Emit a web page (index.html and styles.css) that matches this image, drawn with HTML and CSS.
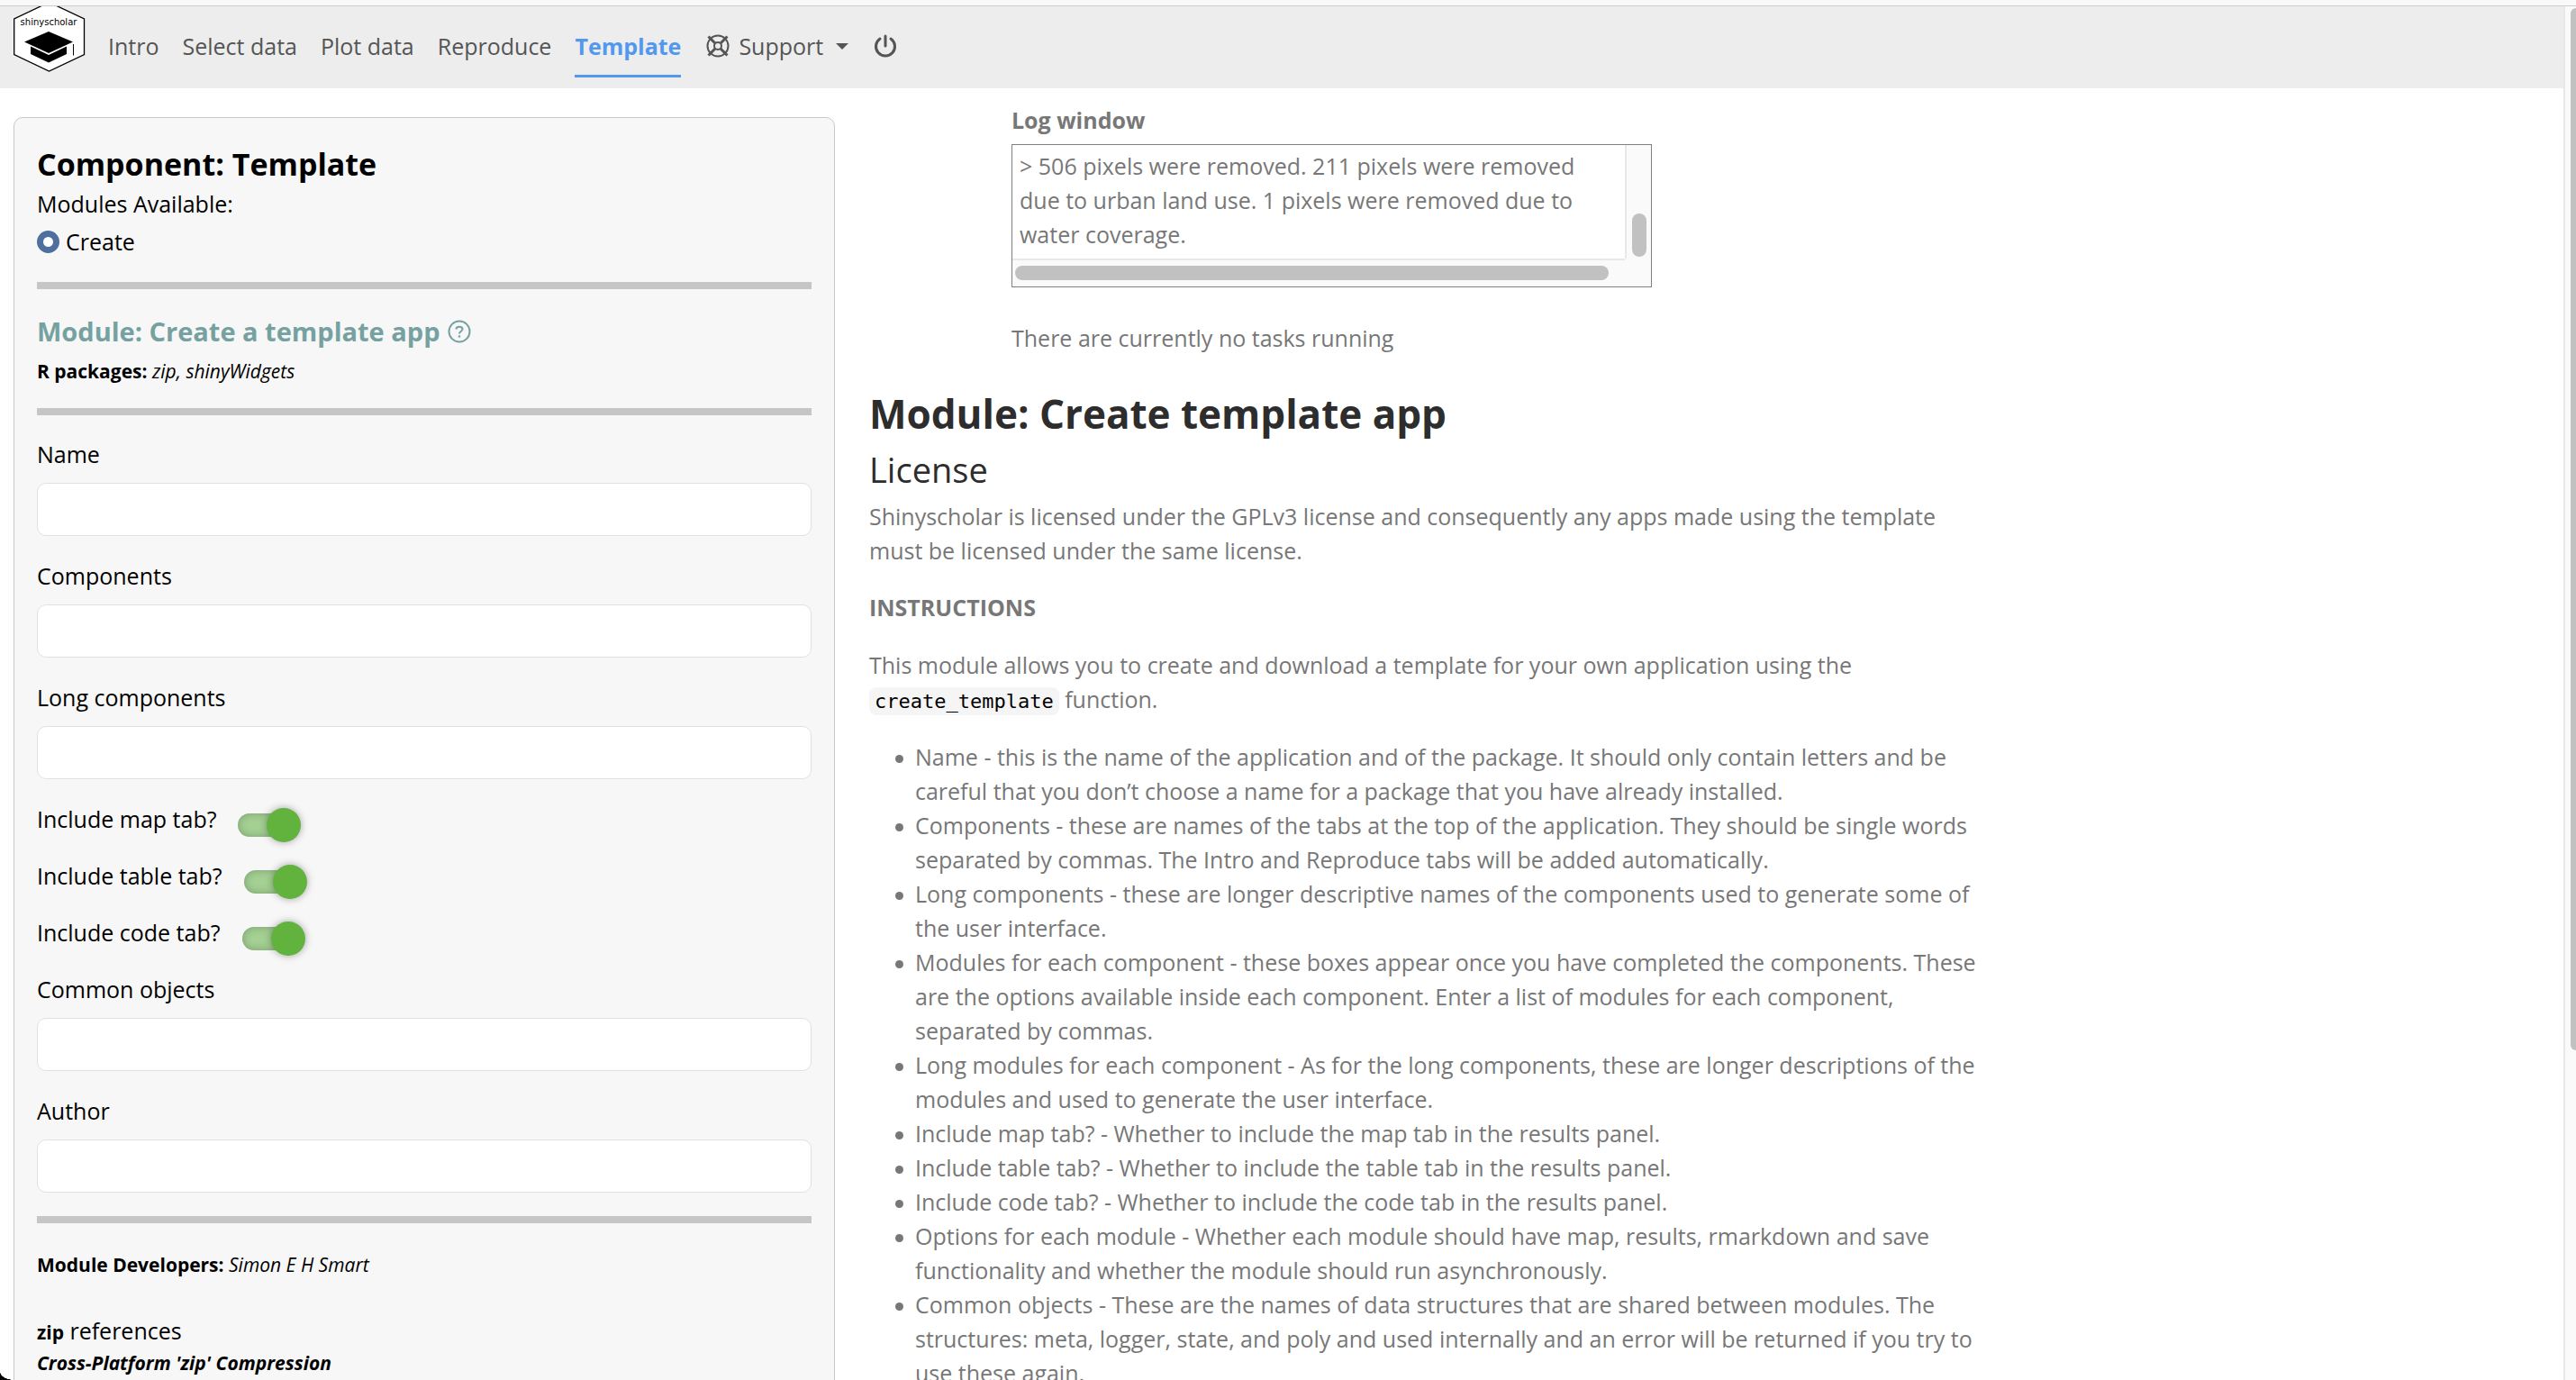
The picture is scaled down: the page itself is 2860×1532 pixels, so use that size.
FILE: index.html
```html
<!DOCTYPE html>
<html lang="en">
<head>
<meta charset="utf-8">
<title>shinyscholar</title>
<link rel="stylesheet" href="styles.css">
</head>
<body>
<div class="window-edge"></div>
<header class="navbar">
  <a class="brand" href="#" aria-label="shinyscholar">
    <svg width="80" height="74" viewBox="15 7 80 74">
      <path d="M54.500 2.500L93.500 21v39.500L54.500 79L15.700 60.500V21Z" fill="#fff" stroke="#000" stroke-width="1.300"/>
      <text class="brand-text" x="54" y="28" text-anchor="middle">shinyscholar</text>
      <path d="M54 35L81 46.500L54 59L27 46.500Z" fill="#000"/>
      <path d="M34 51.500L54 61L74 51.500V60L54 69.500L34 60Z" fill="#000"/>
      <path d="M81.500 49V61.500" stroke="#000" stroke-width="1"/>
    </svg>
  </a>
  <nav class="tabs">
    <a class="tab" href="#">Intro</a>
    <a class="tab" href="#">Select data</a>
    <a class="tab" href="#">Plot data</a>
    <a class="tab" href="#">Reproduce</a>
    <a class="tab tab-active" href="#">Template</a>
    <a class="tab tab-icon" href="#">
      <svg width="26" height="26" viewBox="0 0 26 26" fill="none" stroke="currentColor" stroke-width="2">
        <circle cx="13" cy="13" r="11.500"/><circle cx="13" cy="13" r="4"/>
        <path d="M2.500 2.500l7.500 7.500M23.500 2.500L16 10M2.500 23.500L10 16M23.500 23.500L16 16" stroke-width="3"/>
      </svg>
      Support
      <svg class="caret" width="14" height="7" viewBox="0 0 14 7"><path d="M0 0h14L7 7z" fill="currentColor"/></svg>
    </a>
    <a class="tab tab-icon" href="#" aria-label="Quit">
      <svg width="26" height="26" viewBox="0 0 26 26" fill="none" stroke="currentColor" stroke-width="3" stroke-linecap="round">
        <path d="M13 2v11M7 5A10.500 10.500 0 1 0 19 5"/>
      </svg>
    </a>
  </nav>
</header>
<main class="page">
  <aside class="panel">
    <h2 class="component-title">Component: Template</h2>
    <fieldset class="modules">
      <legend>Modules Available:</legend>
      <label class="radio-row"><input class="radio" type="radio" name="module" checked>Create</label>
    </fieldset>
    <hr class="rule">
    <h3 class="module-title">Module: Create a template app
      <svg width="26" height="26" viewBox="0 0 26 26" fill="none" stroke="currentColor" stroke-width="2">
        <circle cx="13" cy="13" r="11.500"/>
        <path d="M9.500 10.500C9.500 6.800 16.500 6.800 16.500 10.500C16.500 12.800 13 12.800 13 15.500"/>
        <circle cx="13" cy="18.500" r="1.300" fill="currentColor" stroke="none"/>
      </svg>
    </h3>
    <p class="small"><strong>R packages:</strong> <em>zip, shinyWidgets</em></p>
    <hr class="rule">
    <form class="form">
      <div class="field"><label for="name">Name</label><input id="name" class="text" type="text"></div>
      <div class="field"><label for="components">Components</label><input id="components" class="text" type="text"></div>
      <div class="field"><label for="long">Long components</label><input id="long" class="text" type="text"></div>
      <div class="switch-row"><label for="map">Include map tab?</label><input id="map" class="switch" type="checkbox" checked></div>
      <div class="switch-row"><label for="table">Include table tab?</label><input id="table" class="switch" type="checkbox" checked></div>
      <div class="switch-row"><label for="code">Include code tab?</label><input id="code" class="switch" type="checkbox" checked></div>
      <div class="field"><label for="common">Common objects</label><input id="common" class="text" type="text"></div>
      <div class="field"><label for="author">Author</label><input id="author" class="text" type="text"></div>
    </form>
    <hr class="rule">
    <p class="small developers"><strong>Module Developers:</strong> <em>Simon E H Smart</em></p>
    <p class="reference"><strong>zip</strong> references</p>
    <p class="small"><strong><em>Cross-Platform 'zip' Compression</em></strong></p>
  </aside>
  <section class="results">
    <div class="status">
      <h4 class="log-title">Log window</h4>
      <div class="log">
        <div class="log-text">&gt; 506 pixels were removed. 211 pixels were removed due to urban land use. 1 pixels were removed due to water coverage.</div>
        <div class="log-vbar"><span class="log-vthumb"></span></div>
        <div class="log-hbar"><span class="log-hthumb"></span></div>
      </div>
      <p class="tasks">There are currently no tasks running</p>
    </div>
    <article class="guide">
      <h1>Module: Create template app</h1>
      <h2>License</h2>
      <p>Shinyscholar is licensed under the GPLv3 license and consequently any apps made using the template must be licensed under the same license.</p>
      <p><strong>INSTRUCTIONS</strong></p>
      <p>This module allows you to create and download a template for your own application using the <code>create_template</code> function.</p>
      <ul>
        <li>Name - this is the name of the application and of the package. It should only contain letters and be careful that you don’t choose a name for a package that you have already installed.</li>
        <li>Components - these are names of the tabs at the top of the application. They should be single words separated by commas. The Intro and Reproduce tabs will be added automatically.</li>
        <li>Long components - these are longer descriptive names of the components used to generate some of the user interface.</li>
        <li>Modules for each component - these boxes appear once you have completed the components. These are the options available inside each component. Enter a list of modules for each component, separated by commas.</li>
        <li>Long modules for each component - As for the long components, these are longer descriptions of the modules and used to generate the user interface.</li>
        <li>Include map tab? - Whether to include the map tab in the results panel.</li>
        <li>Include table tab? - Whether to include the table tab in the results panel.</li>
        <li>Include code tab? - Whether to include the code tab in the results panel.</li>
        <li>Options for each module - Whether each module should have map, results, rmarkdown and save functionality and whether the module should run asynchronously.</li>
        <li>Common objects - These are the names of data structures that are shared between modules. The structures: meta, logger, state, and poly and used internally and an error will be returned if you try to use these again.</li>
      </ul>
    </article>
  </section>
</main>
<div class="page-scroll"><span class="page-thumb"></span></div>
<div class="window-corner"></div>
</body>
</html>
```
FILE: styles.css
```css
* { box-sizing: border-box; }
body {
  margin: 0;
  height: 100vh;
  overflow: hidden;
  background: #fff;
  color: #777;
  font: 25px/38px "Open Sans", "Noto Sans", sans-serif;
}
h1, h2, h3, h4, p, ul { margin: 0; }

.window-edge { height: 7px; background: #f8f9fb; border-bottom: 1px solid #ccc; }
.navbar {
  display: flex;
  align-items: flex-start;
  height: 91px;
  padding-left: 15px;
  background: #ededed;
}
.brand { display: block; height: 74px; }
.brand-text { font: 10px "DejaVu Sans", sans-serif; fill: #000; }
.tabs { display: flex; gap: 26px; padding: 25px 0 0 25px; }
.tab {
  height: 54px;
  border-bottom: 3px solid transparent;
  color: #555;
  text-decoration: none;
}
.tab-active { border-color: #5299ee; color: #5299ee; font-weight: 700; }
.tab-icon { display: flex; gap: 10px; margin-left: 2px; }
.tab-icon svg { margin-top: 6px; }
.tab-icon .caret { margin: 16px 0 0 4px; }

.page {
  display: grid;
  grid-template-columns: 912fr 1881fr;
  gap: 38px;
  padding: 32px 14px 0 15px;
}
.panel {
  padding: 28px 25px 100px;
  border: 1px solid #c8c8c8;
  border-radius: 10px;
  background: #f7f7f7;
  color: #000;
}
.component-title { font-size: 34px; line-height: 46px; }
.modules { margin: 2px 0 0; padding: 0; border: 0; }
.modules legend { padding: 0; }
.radio-row { display: flex; align-items: center; gap: 7px; margin-top: 4px; }
.radio {
  appearance: none;
  width: 25px;
  height: 25px;
  margin: 0;
  border: 7px solid #4f6f9f;
  border-radius: 50%;
  background: #fff;
}
.rule { height: 8px; margin: 26px 0 24px; border: 0; background: #c6c6c6; }
.module-title {
  display: flex;
  align-items: center;
  gap: 8px;
  padding-top: 2px;
  color: #76a1a1;
  font-size: 29px;
  line-height: 42px;
}
.small { font-size: 21px; line-height: 30px; }
.module-title + .small { margin-top: 8px; }
.form { display: grid; gap: 25px; }
.field { display: grid; gap: 13px; }
.text {
  width: 100%;
  height: 59px;
  padding: 0 18px;
  border: 1px solid #dfe1e3;
  border-radius: 10px;
  background: #fff;
  font: inherit;
}
.switch-row { display: flex; gap: 24px; height: 38px; }
.switch {
  appearance: none;
  position: relative;
  width: 64px;
  height: 26px;
  margin: 13px 0 0;
  border-radius: 13px;
  background: #a4d093;
  box-shadow: inset 0 0 10px rgba(0, 0, 0, .25);
}
.switch::before {
  content: "";
  position: absolute;
  top: -6px;
  right: -6px;
  width: 38px;
  height: 38px;
  border-radius: 50%;
  background: #62b33e;
  box-shadow: 0 0 8px rgba(0, 0, 0, .35);
}
.developers { margin-top: 31px; }
.reference { margin-top: 39px; }
.reference strong { font-size: 21px; }

.status { max-width: 711px; margin: -16px 0 0 158px; }
.log-title { font-size: 25px; }
.log {
  display: grid;
  grid-template: 126px 1fr / 1fr 29px;
  height: 159px;
  margin-top: 8px;
  border: 1px solid #808080;
  background: #fafafa;
}
.log-text { padding: 4px 8px 0; background: #fff; }
.log-vbar { display: flex; align-items: flex-end; justify-content: center; border-left: 2px solid #e8e8e8; }
.log-vthumb { width: 16px; height: 48px; margin-bottom: 2px; border-radius: 8px; background: #c1c1c1; }
.log-hbar { grid-column: 1 / 2; display: flex; align-items: center; padding: 0 18px 2px 3px; border-top: 2px solid #e8e8e8; }
.log-hthumb { flex: 1; height: 16px; border-radius: 8px; background: #c1c1c1; }
.tasks { margin-top: 37px; }

.guide { max-width: 1246px; margin-top: 37px; }
.guide h1 { color: #2d2d2d; font-size: 44px; line-height: 56px; }
.guide h2 { margin-top: 10px; color: #2d2d2d; font-size: 38px; font-weight: 400; line-height: 48px; }
.guide p { margin-bottom: 26px; }
.guide h2 + p { margin: 9px 0 25px; }
.guide code {
  padding: 3px 6px;
  border-radius: 8px;
  background: #f5f5f5;
  color: #000;
  font: 22px/28px "DejaVu Sans Mono", monospace;
}
.guide ul { padding-left: 51px; list-style: none; }
.guide li { position: relative; }
.guide li::before {
  content: "";
  position: absolute;
  left: -22px;
  top: 17px;
  width: 9px;
  height: 9px;
  border-radius: 50%;
  background: #777;
}

.page-scroll {
  position: fixed;
  inset: 7px 0 0 auto;
  width: 14px;
  padding: 2px 0 0 6px;
  border-left: 2px solid #e8e8e8;
  background: #fafafa;
}
.page-thumb { display: block; height: 76%; border-radius: 8px 0 0 8px; background: #c1c1c1; }
.window-corner {
  position: fixed;
  left: 0;
  bottom: 0;
  width: 16px;
  height: 9px;
  background: radial-gradient(ellipse 16px 9px at 100% 0, transparent 97%, #000 100%);
}
```
